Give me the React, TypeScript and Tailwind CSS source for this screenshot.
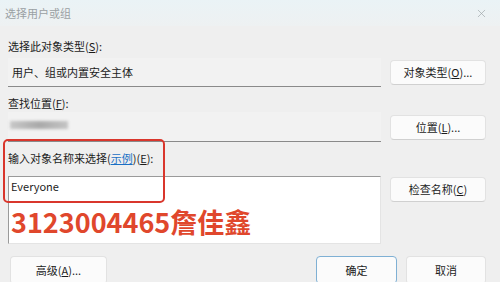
import { X } from 'lucide-react'

const font = { fontFamily: '"Noto Sans CJK SC", "Noto Sans", sans-serif' }

function Btn({ children, primary = false, className = '' }: { children: React.ReactNode; primary?: boolean; className?: string }) {
  return (
    <div
      className={`flex items-center justify-center rounded-[4px] bg-[#fbfbfb] text-[11px] text-[#1b1b1b] ${
        primary ? 'border-[1.5px] border-[#7fb0d4]' : 'border border-[#e2e2e2] border-b-[#d0d0d0]'
      } ${className}`}
    >
      {children}
    </div>
  )
}

export default function App() {
  return (
    <div className="relative w-[500px] h-[282px] overflow-hidden bg-[#efefef] text-[#1b1b1b]" style={font}>
      {/* Title bar */}
      <div className="flex items-center justify-between h-[26px] pl-[5px] pr-[12px] bg-gradient-to-b from-[#eaf3f6] to-[#eef1f2]">
        <span className="text-[11px] text-[#9aa0a3]">选择用户或组</span>
        <X size={13} strokeWidth={1.2} className="text-[#9aa3a6]" />
      </div>

      <div className="flex flex-col pl-[8px] pr-[14px]">
        {/* Object type */}
        <div className="mt-[12px] h-[16px] leading-[16px] text-[11px]">
          选择此对象类型(<span className="underline">S</span>):
        </div>
        <div className="flex items-center gap-[9px] mt-[4px]">
          <div className="flex items-center w-[373px] h-[29px] pl-[4px] bg-[#f2f2f2] border-b border-[#8a8a8a] text-[11px]">
            用户、组或内置安全主体
          </div>
          <Btn className="w-[96px] h-[25px]">
            对象类型(<span className="underline">O</span>)...
          </Btn>
        </div>

        {/* Location */}
        <div className="mt-[8px] h-[16px] leading-[16px] text-[11px]">
          查找位置(<span className="underline">F</span>):
        </div>
        <div className="flex items-center gap-[9px] mt-[1px]">
          <div className="flex items-center w-[373px] h-[30px] pl-[2px] bg-[#f2f2f2] border-b border-[#8a8a8a]">
            <div className="w-[58px] h-[8px] -mt-[4px] bg-gradient-to-r from-[#c8c8c8] via-[#a9a9a9] to-[#c4c4c4] blur-[1.5px]" />
          </div>
          <Btn className="w-[96px] h-[25px]">
            位置(<span className="underline">L</span>)...
          </Btn>
        </div>

        {/* Names */}
        <div className="mt-[8px] h-[16px] leading-[16px] text-[11px]">
          输入对象名称来选择(<span className="text-[#1a6fc4] underline">示例</span>)(
          <span className="underline">E</span>):
        </div>
        <div className="flex items-start gap-[9px] mt-[10px]">
          <div className="w-[373px] h-[68px] bg-white border-t-[1.5px] border-l border-[#9a9a9a] border-r border-r-[#e4e4e4] border-b border-b-[#e4e4e4]">
            <div className="pl-[2px] pt-[2px] text-[11px] leading-[14px]">Everyone</div>
          </div>
          <Btn className="w-[96px] h-[25px] mt-[1px]">
            检查名称(<span className="underline">C</span>)
          </Btn>
        </div>

        {/* Bottom buttons */}
        <div className="flex items-center mt-[12px]">
          <Btn className="w-[97px] h-[28px] ml-[2px]">
            高级(<span className="underline">A</span>)...
          </Btn>
          <div className="flex-1" />
          <Btn primary className="w-[81px] h-[28px]">确定</Btn>
          <Btn className="w-[80px] h-[28px] ml-[9px]">取消</Btn>
        </div>
      </div>

      {/* Red highlight box */}
      <div className="absolute left-[3px] top-[139px] w-[162px] h-[64px] rounded-[5px] border-[2.5px] border-[#d9362c]" />

      {/* Watermark */}
      <div
        className="absolute left-[11px] top-[204px] text-[27px] leading-[36px] font-bold text-[#e0472c] whitespace-nowrap"
        style={{ textShadow: '0 0 2px #fff, 0 0 2px #fff' }}
      >
        3123004465詹佳鑫
      </div>
    </div>
  )
}
